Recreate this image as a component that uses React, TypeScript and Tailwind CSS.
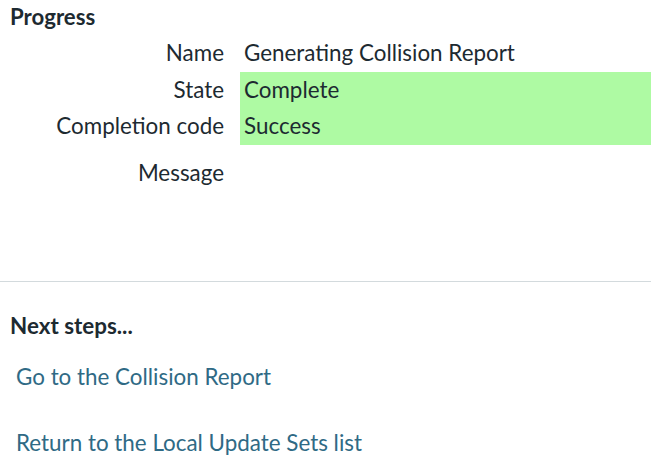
export default function App() {
  const rows: { label: string; value: string; ok?: boolean }[] = [
    { label: "Name", value: "Generating Collision Report" },
    { label: "State", value: "Complete", ok: true },
    { label: "Completion code", value: "Success", ok: true },
  ];

  return (
    <div className="w-[651px] h-[464px] bg-white text-[#1d2a31] font-['Lato',sans-serif] overflow-hidden">
      {/* Progress */}
      <div className="h-[281px]">
        <h2 className="pl-[10px] pt-[3px] text-[22.2px] font-bold leading-[28px]">Progress</h2>
        <div className="pt-[4px]">
          {rows.map((r) => (
            <div key={r.label} className="flex h-[36.5px] items-center">
              <div className="w-[224px] text-right text-[22.4px]">{r.label}</div>
              <div
                className={
                  "ml-[16px] flex h-full flex-1 items-center pl-[4px] text-[22.4px] " +
                  (r.ok ? "bg-[#aefaa3]" : "")
                }
              >
                {r.value}
              </div>
            </div>
          ))}
          <div className="flex pt-[14px]">
            <div className="w-[224px] text-right text-[22.4px] leading-[28px]">Message</div>
            <div className="ml-[16px] flex-1" />
          </div>
        </div>
      </div>

      <div className="border-t border-[#d3dadd]" />

      {/* Next steps */}
      <div className="pl-[10px] pt-[32px]">
        <h2 className="text-[22.4px] font-bold leading-[24px]">Next steps...</h2>
        <div className="flex flex-col gap-[38px] pt-[25px] pl-[6px]">
          <a href="#" className="text-[22.4px] leading-[28px] text-[#2f6a85]">
            Go to the Collision Report
          </a>
          <a href="#" className="text-[22.4px] leading-[28px] text-[#2f6a85]">
            Return to the Local Update Sets list
          </a>
        </div>
      </div>
    </div>
  );
}
